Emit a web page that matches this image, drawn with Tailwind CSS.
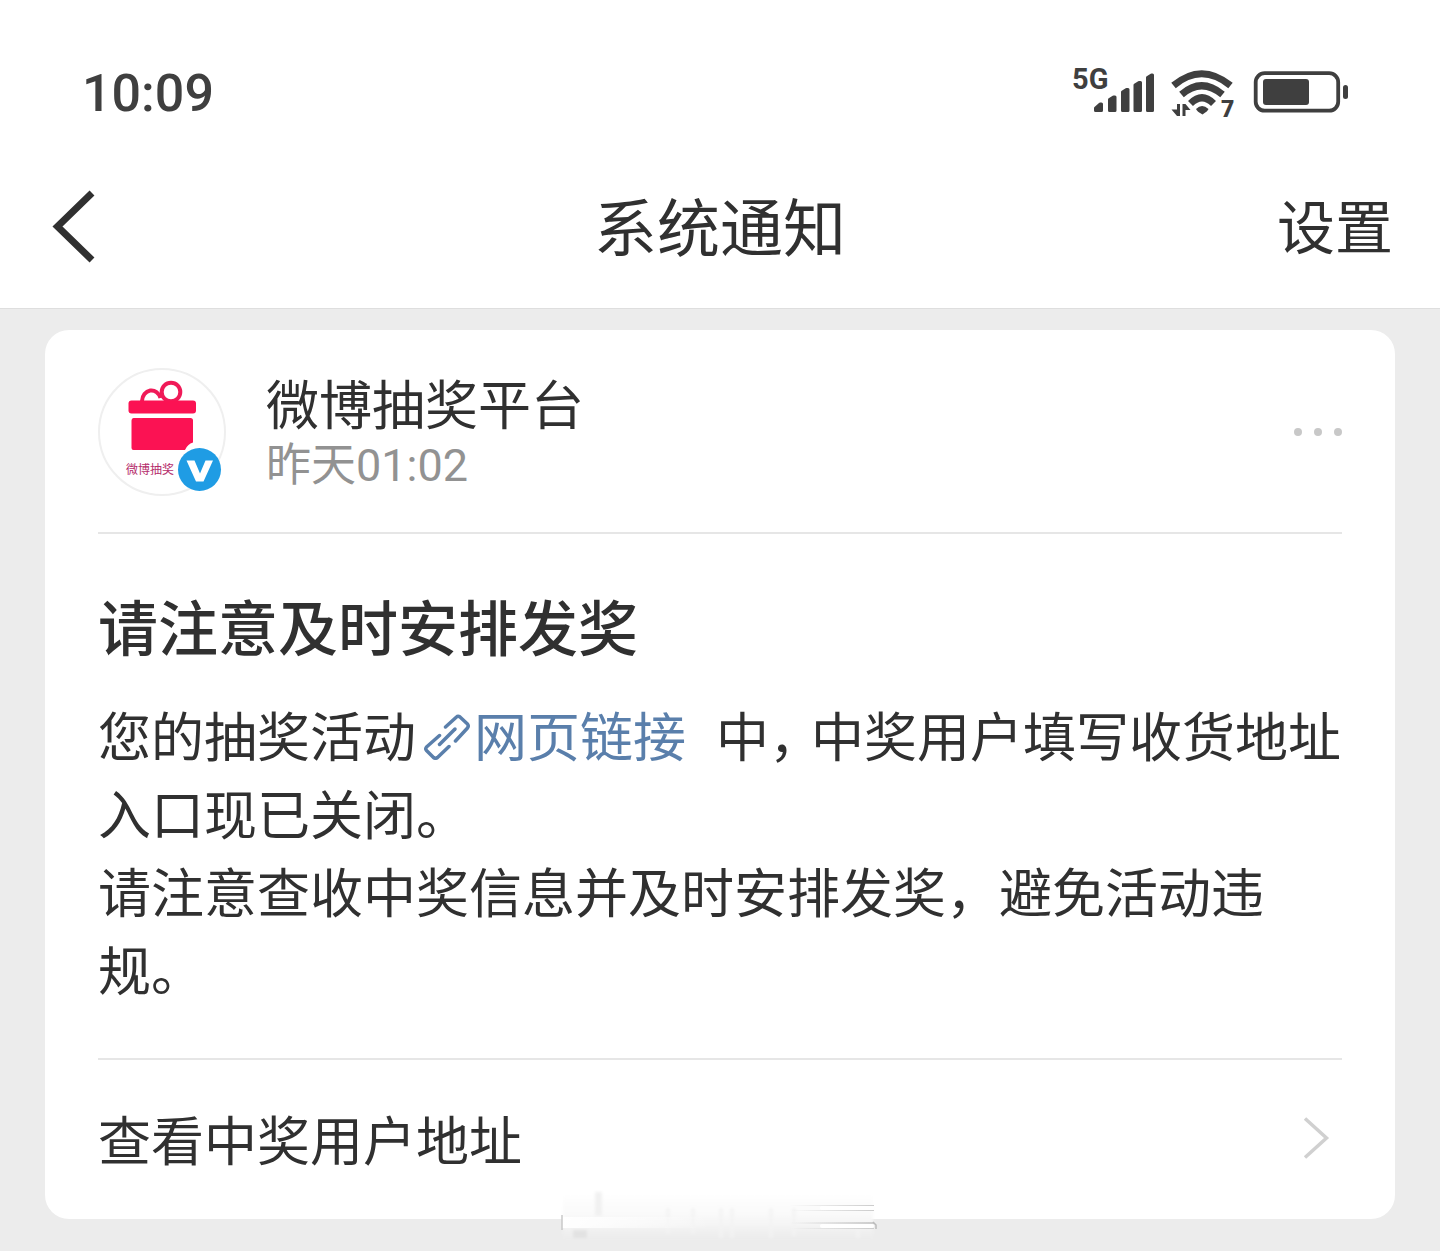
<!DOCTYPE html>
<html lang="zh-CN">
<head>
<meta charset="utf-8">
<meta name="viewport" content="width=device-width, initial-scale=1">
<title>系统通知</title>
<script src="https://cdn.jsdelivr.net/npm/@tailwindcss/browser@4"></script>
</head>
<body class="min-h-screen bg-[#ececec] text-[#303030] font-['Noto_Sans_CJK_SC',sans-serif]">
<header class="border-b border-[#dedede] bg-white pb-2">
  <!-- Status bar -->
  <div class="flex h-[152px] items-center justify-between pt-8 pr-[90px] pl-[82px] text-[#3f3f3f]">
    <time class="pt-1 font-[Roboto,sans-serif] text-[52px] leading-[60px] font-medium">10:09</time>
    <svg class="h-20 w-[280px]" viewBox="1070 52 280 80" fill="currentColor" role="img" aria-label="5G 信号、Wi-Fi 7、电量">
      <text x="1072" y="89" font-family="Roboto, sans-serif" font-size="29" font-weight="700">5G</text>
      <g stroke="currentColor" stroke-width="3" stroke-linejoin="round">
        <path d="M1095.500 110.500v-2.500l4.500-4h1.500v6.500z"/>
        <path d="M1109.500 110.500v-11l4-2.500h1.500v13.500z"/>
        <path d="M1122.500 110.500v-18.500l4-2.500h1.500v21z"/>
        <path d="M1135 110.500v-25.500l4-2.500h1.500v28z"/>
        <path d="M1147.500 110.500v-33l4-2.500h1v35.500z"/>
      </g>
      <g fill="none" stroke="currentColor" stroke-width="7">
        <path d="M1173.500 85.500Q1201.500 62 1230.500 85.500"/>
        <path d="M1181.500 94.500Q1201.500 77 1222.500 94.500"/>
        <path d="M1190.500 103.500Q1202 92 1213.500 103.500"/>
      </g>
      <path d="M1196 109Q1202 103 1208.500 109Q1208 111 1202.500 114.500Q1197 111.500 1196 109Z"/>
      <path d="M1177 104h3v12h-3l-5.500-6.500h5.500zM1185.500 116h-3v-12h3l5 6h-5z"/>
      <text x="1221" y="117" font-family="Roboto, sans-serif" font-size="23" font-weight="900">7</text>
      <rect x="1255.700" y="73.200" width="82.500" height="37.500" rx="9" fill="none" stroke="currentColor" stroke-width="3.800"/>
      <rect x="1263" y="79" width="46" height="26" rx="3"/>
      <rect x="1343" y="85" width="5" height="14" rx="2.500"/>
    </svg>
  </div>
  <!-- Navigation -->
  <nav class="grid h-[148px] grid-cols-[1fr_auto_1fr] items-center px-[47px]">
    <button type="button" aria-label="返回" class="justify-self-start">
      <svg class="h-[76px] w-[52px]" viewBox="47 188 52 76" fill="none" stroke="#303030" stroke-width="7"><path d="M92 193L57.500 226.500L92 260"/></svg>
    </button>
    <h1 class="pb-1 text-[63px] leading-[80px]">系统通知</h1>
    <button type="button" class="justify-self-end pb-1 text-[58px] leading-[80px]">设置</button>
  </nav>
</header>

<main class="relative px-[45px] pt-[21px] pb-8">
  <article class="rounded-3xl bg-white px-[53px]">
    <div class="flex items-center border-b-2 border-[#e6e6e6] pt-[38px] pb-9">
      <svg class="size-32 shrink-0" viewBox="98 368 128 128" role="img" aria-label="微博抽奖">
        <circle cx="162" cy="432" r="63" fill="#fff" stroke="#efefef" stroke-width="2"/>
        <g fill="none" stroke="#f01a58" stroke-width="4">
          <path d="M142 401a9.500 11 0 0 1 18.500 -3"/>
          <circle cx="171" cy="392" r="9.300"/>
        </g>
        <rect x="128.500" y="400.500" width="67.500" height="13" rx="3" fill="#fb1253"/>
        <path d="M133.500 418h57q2.500 0 2.500 2.500v22q-5.500 1.500-8 7.500h-51.500q-2 0-2-2v-27.500q0-2.500 2-2.500z" fill="#fb1253"/>
        <text x="126" y="473.500" font-size="12" fill="#b52d6c">微博抽奖</text>
        <circle cx="199.500" cy="469.500" r="21.500" fill="#1f9ce4"/>
        <path d="M186.500 460.500h8l5.500 13 5.500-13h7.500l-9.500 21h-7.500z" fill="#fff"/>
      </svg>
      <div class="ml-10 flex-1 pt-1">
        <h2 class="text-[53px] leading-[60px]">微博抽奖平台</h2>
        <p class="text-[45px] leading-[60px] text-[#929292]">昨天<time class="font-[Roboto,sans-serif]">01:02</time></p>
      </div>
      <button type="button" aria-label="更多" class="flex gap-3">
        <span class="size-2 rounded-full bg-[#c8c8c8]"></span>
        <span class="size-2 rounded-full bg-[#c8c8c8]"></span>
        <span class="size-2 rounded-full bg-[#c8c8c8]"></span>
      </button>
    </div>
    <div class="border-b-2 border-[#e6e6e6] py-[51px]">
      <h3 class="text-[60px] leading-[80px] font-medium">请注意及时安排发奖</h3>
      <p class="mt-[30px] text-[53px] leading-[78px]">您的抽奖活动<a href="#" class="mr-[30px] text-[#5a7fab]"><svg class="mr-1 ml-2 inline-block h-[46px] w-[46px] align-[-3px]" viewBox="0 0 46 46" fill="none" stroke="currentColor" stroke-width="3.500" stroke-linecap="round" stroke-linejoin="round" aria-hidden="true"><path d="M21.500 13L32.500 3Q34 1.500 36 3L43.500 10Q45 12 43.500 14L31.500 27"/><path d="M15.500 30.500L31 15"/><path d="M15.500 21.500L2.500 33Q1 35 2.500 36.500L9.500 43.500Q11.500 45 13.500 43.500L25 32.500"/></svg>网页链接</a>中<span class="inline-block w-[42px]">，</span>中奖用户填写收货地址入口现已关闭。<br>请注意查收中奖信息并及时安排发奖，避免活动违规。</p>
    </div>
    <a href="#" class="flex h-[159px] items-center justify-between pr-3 pb-1 text-[53px] leading-[78px]">
      查看中奖用户地址
      <svg class="h-11 w-7" viewBox="1303 1116 28 44" fill="none" stroke="#d0d0d0" stroke-width="3.500" aria-hidden="true"><path d="M1306 1118.500L1327.500 1138L1306 1157.500"/></svg>
    </a>
  </article>
  <!-- Faint frosted strip over the lower edge of the card -->
  <svg class="pointer-events-none absolute bottom-0 left-1/2 h-[71px] w-[360px] -translate-x-1/2" viewBox="0 0 360 71" aria-hidden="true">
    <defs>
      <filter id="soft" x="-5%" y="-20%" width="110%" height="140%"><feGaussianBlur stdDeviation="1.500"/></filter>
      <linearGradient id="veil" x1="0" y1="0" x2="0" y2="1">
        <stop offset="0" stop-color="#fff"/><stop offset=".5" stop-color="#f9f9f9"/><stop offset="1" stop-color="#ececec"/>
      </linearGradient>
      <linearGradient id="left" x1="0" y1="0" x2="1" y2="0">
        <stop offset="0" stop-color="#fff"/><stop offset="1" stop-color="#fff" stop-opacity="0"/>
      </linearGradient>
      <linearGradient id="right" x1="0" y1="0" x2="1" y2="0">
        <stop offset="0" stop-color="#ccc" stop-opacity="0"/><stop offset="1" stop-color="#ccc"/>
      </linearGradient>
    </defs>
    <g filter="url(#soft)">
      <rect x="23" y="13" width="310" height="46" fill="url(#veil)"/>
      <rect x="55" y="12" width="7" height="24" fill="#f1f1f1"/>
      <rect x="33" y="50" width="14" height="8" fill="#e2e2e2"/>
      <path d="M128 28v26M153 28v26M181 28v30M192 28v30M231 28v30M254 28v28M318 48v10" stroke="#f3f3f3" stroke-width="3"/>
    </g>
    <rect x="22" y="37" width="150" height="11" fill="url(#left)"/>
    <path d="M22 35v15" stroke="#c8c8c8" stroke-width="1.500"/>
    <rect x="250" y="25" width="84" height="1" fill="url(#right)"/>
    <rect x="280" y="26" width="54" height="4" rx="2" fill="#fff"/>
    <rect x="250" y="30" width="84" height="1" fill="url(#right)"/>
    <rect x="250" y="42" width="84" height="2" fill="url(#right)"/>
    <rect x="280" y="44" width="54" height="4" rx="2" fill="#fff"/>
    <rect x="250" y="48" width="84" height="1" fill="url(#right)"/>
    <path d="M333 42l3 3v4" fill="none" stroke="#bbb" stroke-width="1.500"/>
  </svg>
</main>
</body>
</html>
